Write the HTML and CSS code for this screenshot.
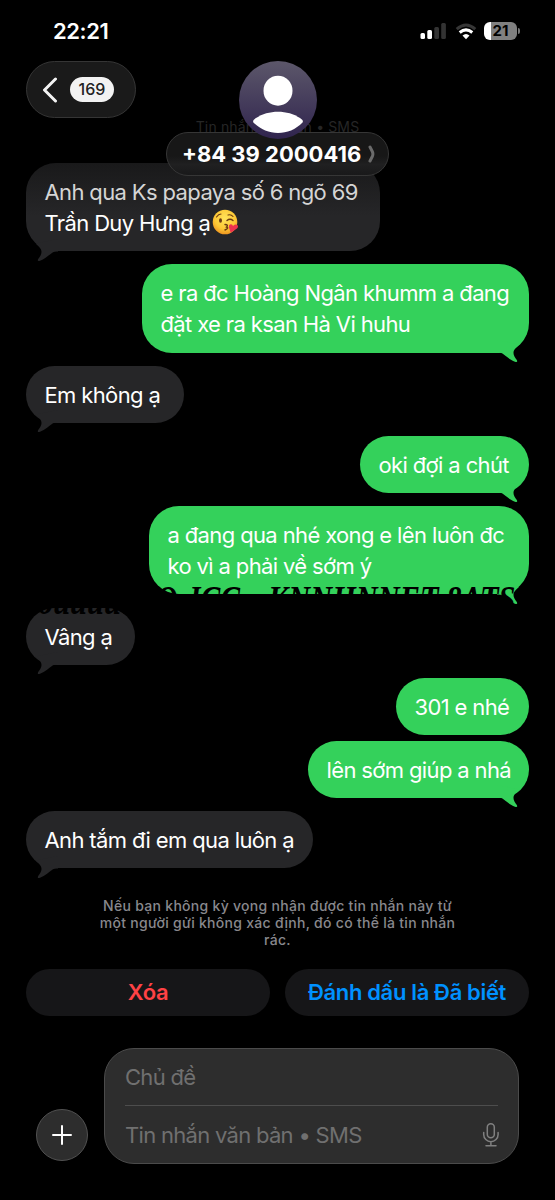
FILE: index.html
```html
<!DOCTYPE html>
<html lang="vi">
<head>
<meta charset="utf-8">
<title>Tin nhắn</title>
<link rel="stylesheet" href="styles.css">
</head>
<body>
<svg class="defs" width="0" height="0" aria-hidden="true">
  <symbol id="tail" viewBox="0 0 34 28"><path d="M9.600 9.500C13 13 15.500 14.500 15.500 18C15.500 20.500 14 22.500 12.200 25C11.200 26.800 12 27.600 14 26.800C19 25 23.500 20.500 27 18.300Q28.500 17.300 32 17.500L32 5Z"/></symbol>
</svg>
<div class="phone">
  <header class="status">
    <span class="clock">22:21</span>
    <div class="indicators">
      <svg width="27" height="18" viewBox="0 0 27 18"><g fill="#fff"><rect x="0.500" y="11" width="4.500" height="6" rx="1.500"/><rect x="7.300" y="8" width="4.700" height="9" rx="1.500"/></g><g fill="#333"><rect x="14.300" y="5" width="4.700" height="12" rx="1.500"/><rect x="21.200" y="1" width="4.700" height="16" rx="1.500"/></g></svg>
      <svg width="22" height="17" viewBox="0 0 22 17" fill="none"><path d="M1.700 6.100Q11-2.100 20.300 6.100" stroke="#363636" stroke-width="3"/><path d="M4.700 9.500Q11 4.200 17.300 9.500" stroke="#fff" stroke-width="3"/><path d="M7.500 12.600Q11 9.500 14.500 12.600L11 16.200Z" fill="#fff"/></svg>
      <div class="battery"><span>21</span></div>
    </div>
  </header>
  <nav class="nav">
    <div class="back"><svg width="16" height="26" viewBox="0 0 16 26"><path d="M13.500 2L2.500 13L13.500 24" fill="none" stroke="#f3f3f3" stroke-width="3" stroke-linecap="round" stroke-linejoin="round"/></svg><span class="count">169</span></div>
  </nav>
  <div class="faded">Tin nhắn văn bản • SMS</div>
  <div class="contact">
    <svg class="avatar" width="78" height="78" viewBox="0 0 78 78"><defs><linearGradient id="ag" x2="0" y2="1"><stop stop-color="#5c576a"/><stop offset="1" stop-color="#30244e"/></linearGradient></defs><circle cx="39" cy="39" r="39" fill="url(#ag)"/><ellipse cx="39" cy="29.700" rx="14.500" ry="15" fill="#fff"/><path d="M14.500 61.500C13.500 60 14.500 58.800 17 57C29 48.500 49 48.500 61 57C63.500 58.800 64.500 60 63.500 61.500C50 75.500 28 75.500 14.500 61.500Z" fill="#fff"/></svg>
    <div class="number"><span class="num">+84 39 2000416</span><svg width="8" height="18" viewBox="0 0 8 18"><path d="M2 2L4.300 6.500Q5.500 9 4.300 11.500L2 16" fill="none" stroke="#6b6b6b" stroke-width="3" stroke-linecap="round"/></svg></div>
  </div>
  <main class="thread">
    <div class="msg in two first w354"><p><span class="l1">Anh qua Ks papaya số 6 ngõ 69</span><br><span>Trần Duy Hưng ạ</span><svg class="emoji" width="27" height="27" viewBox="0 0 27 27"><defs><radialGradient id="eg" cx=".5" cy=".35" r=".65"><stop stop-color="#ffe35a"/><stop offset=".65" stop-color="#fdc835"/><stop offset="1" stop-color="#ee9620"/></radialGradient></defs><circle cx="13" cy="13" r="12.300" fill="url(#eg)"/><g fill="none" stroke="#6b3b12" stroke-linecap="round"><path d="M4.500 8Q6.500 5 9 5M16 6Q19 5 21 7.500" stroke-width="1.100"/><path d="M15 11.500Q18 9 21 11.500M13 15.500Q17 15.800 14.500 18Q17.500 19 13 21" stroke-width="1.400"/></g><ellipse cx="8.500" cy="11.500" rx="1.500" ry="2.200" fill="#6b3b12"/><path d="M18.700 23.800L17 18.500Q16.500 15.200 19 15.200Q20.500 15.200 21 17Q22.500 14.700 25 15.700Q27 17 25 19.500Z" fill="#ee334e"/></svg></p><svg class="tail"><use href="#tail"/></svg></div>
    <div class="msg out two w387"><p>e ra đc Hoàng Ngân khumm a đang<br>đặt xe ra ksan Hà Vi huhu</p><svg class="tail"><use href="#tail"/></svg></div>
    <div class="msg in w158"><p>Em không ạ</p><svg class="tail"><use href="#tail"/></svg></div>
    <div class="msg out w169"><p>oki đợi a chút</p><svg class="tail"><use href="#tail"/></svg></div>
    <div class="msg out two w380"><p>a đang qua nhé xong e lên luôn đc<br>ko vì a phải về sớm ý</p><svg class="tail"><use href="#tail"/></svg><div class="mark mark-a">OıJCC</div><div class="mark mark-c">KNNHNNET&nbsp;8ATS</div></div>
    <div class="msg in w109"><div class="mark mark-b">ouuuuu</div><p>Vâng ạ</p><svg class="tail"><use href="#tail"/></svg></div>
    <div class="msg out tight w133"><p>301 e nhé</p></div>
    <div class="msg out w221"><p>lên sớm giúp a nhá</p><svg class="tail"><use href="#tail"/></svg></div>
    <div class="msg in w287"><p>Anh tắm đi em qua luôn ạ</p><svg class="tail"><use href="#tail"/></svg></div>
  </main>
  <p class="notice">Nếu bạn không kỳ vọng nhận được tin nhắn này từ<br>một người gửi không xác định, đó có thể là tin nhắn<br>rác.</p>
  <div class="actions"><div class="action del"><span>Xóa</span></div><div class="action known"><span>Đánh dấu là Đã biết</span></div></div>
  <footer class="composer">
    <div class="plus"><svg width="22" height="22" viewBox="0 0 22 22"><path d="M11 2V20M2 11H20" stroke="#fff" stroke-width="2" stroke-linecap="round"/></svg></div>
    <div class="fields">
      <div class="subject"><span>Chủ đề</span></div>
      <div class="body"><span>Tin nhắn văn bản • SMS</span><svg width="18" height="26" viewBox="0 0 18 26" fill="none" stroke="#808080" stroke-width="1.500" stroke-linecap="round"><rect x="5.300" y="1.800" width="7" height="14" rx="3.500"/><path d="M1.700 10.500V12.500A7.200 7.200 0 0 0 16.100 12.500V10.500M8.900 19.700V23.800M4 23.800H14"/></svg></div>
    </div>
  </footer>
</div>
</body>
</html>
```
FILE: styles.css
```css
*{box-sizing:border-box}
body{margin:0;background:#000;color:#fff;font-family:Inter,"Noto Sans",sans-serif}
p{margin:0}
svg{flex:none}
.defs{position:absolute}
.phone{position:relative;width:555px;height:1200px;background:#000;overflow:hidden;display:flex;flex-direction:column}
.status{height:61px;flex:none;padding:1px 38px 0 53px;display:flex;justify-content:space-between;align-items:center}
.clock{font-size:22px;font-weight:600;letter-spacing:-.4px}
.indicators{display:flex;align-items:center;gap:7.500px}
.battery{position:relative;width:33px;height:18px;border-radius:6px;background:linear-gradient(90deg,#fff 7px,#808080 7px);color:#000;font-size:15px;line-height:18px;font-weight:700;text-align:center}
.battery::after{content:"";position:absolute;left:34px;top:6px;width:2px;height:6px;border-radius:0 3px 3px 0;background:#777}
.nav{height:102px;flex:none;padding-left:26px}
.back{width:110px;height:57px;border-radius:29px;background:#1a1a1a;border:1px solid #353535;padding-left:15px;display:flex;align-items:center;gap:12px}
.count{width:44px;height:25px;border-radius:13px;background:#f2f2f2;color:#222;font-size:16px;line-height:25px;font-weight:500;text-align:center}
.faded{position:absolute;top:118px;left:0;width:555px;text-align:center;font-size:14px;line-height:18px;letter-spacing:.15px;color:#262626}
.contact{position:absolute;z-index:2;top:61px;left:166px;width:223px;display:flex;flex-direction:column;align-items:center}
.avatar{position:relative;z-index:1}
.number{width:223px;height:44px;margin-top:-7px;border-radius:22px;border:1px solid #363636;background:linear-gradient(#171717 0 55%,#202021 75%,#19191a);display:flex;align-items:center;justify-content:space-between;padding:0 12px 0 15px;font-size:22px;font-weight:700;white-space:nowrap}
.thread{padding:0 26px;display:flex;flex-direction:column;gap:13.2px}
.msg{position:relative;height:57px;border-radius:28.5px;padding:14px 18.500px 12px;font-size:22px;line-height:31px;letter-spacing:-.63px;white-space:nowrap;background:#262628}
.two{height:88.200px;border-radius:30px}
.out{align-self:flex-end;background:#34d15b}
.tight{margin-bottom:-7px}
.first{background:linear-gradient(#19191a,#262628 60%)}
.first .l1{color:#d5d5d5}
.tail{position:absolute;width:34px;height:28px;left:0;bottom:-10.500px;fill:#262628}
.out .tail{left:auto;right:0;fill:#34d15b;transform:scaleX(-1)}
.msg p{position:relative;z-index:1}
.emoji{display:inline-block;vertical-align:-5px;margin-left:2px}
.w354{width:354px}.w387{width:387px}.w158{width:158px}.w169{width:169px}.w380{width:380px}.w109{width:109px}.w133{width:133px}.w221{width:221px}.w287{width:287px}
.mark{position:absolute;z-index:2;color:#000;font:italic bold 38px/38px "Liberation Serif",serif;letter-spacing:0;transform-origin:0 0}
.mark-a{left:7px;top:74px;transform:scaleX(.78)}
.mark-c{left:119px;top:74px;transform:scaleX(.8)}
.mark-b{left:12px;top:-26px;transform:scaleX(.8)}
.notice{margin-top:28.500px;text-align:center;color:#88888d;font-size:14px;line-height:17px;font-weight:500;letter-spacing:.29px}
.actions{margin:21px 26px 0;display:flex;justify-content:space-between}
.action{width:244px;height:47px;border-radius:24px;background:#161618;display:flex;align-items:center;justify-content:center;font-size:22px;font-weight:600;letter-spacing:-.35px;white-space:nowrap}
.del{color:#ff4245}.known{color:#0091ff}
.composer{margin:32px 36px 0;display:flex;align-items:flex-end;gap:16px}
.plus{width:52px;height:52px;margin-bottom:3px;border-radius:50%;background:#2d2d2d;border:1px solid #515151;display:flex;align-items:center;justify-content:center}
.fields{width:415px;height:116px;border-radius:30px;background:#2d2d2d;border:1px solid #4b4b4b;padding:0 20px;font-size:22px;letter-spacing:-.7px;color:#707070;white-space:nowrap}
.subject{height:57px;border-bottom:1px solid #4d4d4d;display:flex;align-items:center}
.body{height:57px;display:flex;align-items:center;justify-content:space-between;padding:2px 0 0}
.body svg{margin-right:-2px}
```
